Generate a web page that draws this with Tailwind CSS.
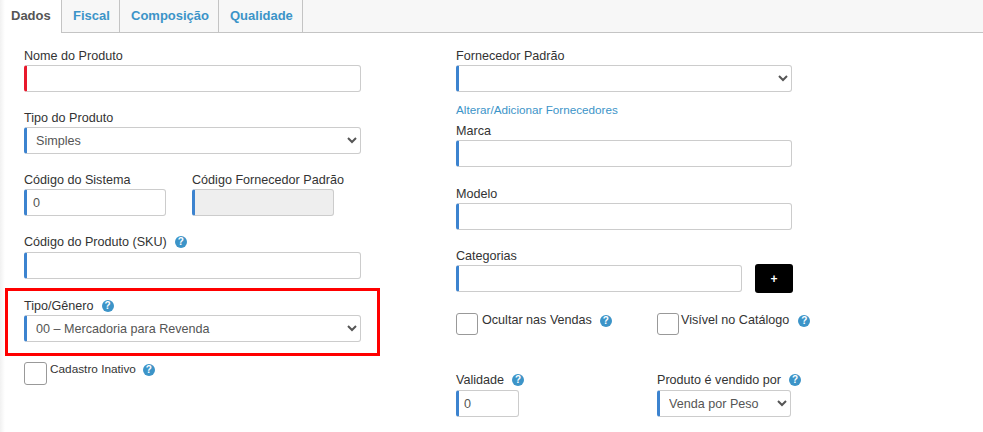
<!DOCTYPE html>
<html lang="pt-BR">
<head>
  <meta charset="UTF-8" />
  <title>Produto</title>
  <script src="https://cdn.jsdelivr.net/npm/@tailwindcss/browser@4"></script>
</head>
<body class="bg-white font-['Liberation_Sans',Arial,sans-serif] text-[12.6px] leading-[18px] text-[#333] overflow-hidden">
  <div class="relative h-[432px] w-[983px] overflow-hidden">
    <!-- soft shadow on the page edge -->
    <div class="absolute inset-y-0 left-0 w-[5px] bg-gradient-to-r from-[#f1f1f1] to-transparent"></div>

    <!-- Tabs -->
    <nav class="flex h-[33px] border-b border-[#c4c4c4] bg-[#f7f7f7] text-[13px] font-bold">
      <a class="w-[62px] h-[33px] bg-white border-r border-[#c4c4c4] pl-[11px] pt-[7px] text-[#555]">Dados</a>
      <a class="w-[58px] border-r border-[#c4c4c4] pl-[11px] pt-[7px] text-[#3c94c8]">Fiscal</a>
      <a class="w-[99px] border-r border-[#c4c4c4] pl-[11px] pt-[7px] text-[#3c94c8]">Composição</a>
      <a class="w-[84px] border-r border-[#c4c4c4] pl-[11px] pt-[7px] text-[#3c94c8]">Qualidade</a>
    </nav>

    <main class="flex pt-[14px]">
      <!-- Left column -->
      <section class="w-[456px] pl-[24px] shrink-0">
        <label class="block h-[18px]">Nome do Produto</label>
        <input class="block w-[337px] h-[27px] bg-white border border-[#ccc] border-l-[3px] border-l-[#e8192c] rounded-[3px]" />

        <label class="block h-[18px] mt-[17px]">Tipo do Produto</label>
        <select class="block w-[337px] h-[27px] bg-white border border-[#ccc] border-l-[3px] border-l-[#3c83cf] rounded-[3px] pl-[5px] text-[#555]">
          <option>Simples</option>
        </select>

        <div class="flex gap-[26px] mt-[17px]">
          <div>
            <label class="block h-[18px]">Código do Sistema</label>
            <input value="0" class="block w-[142px] h-[27px] bg-white border border-[#ccc] border-l-[3px] border-l-[#3c83cf] rounded-[3px] pl-[6px] text-[#555]" />
          </div>
          <div>
            <label class="block h-[18px]">Código Fornecedor Padrão</label>
            <input disabled class="block w-[142px] h-[27px] bg-[#eee] border border-[#ccc] border-l-[3px] border-l-[#3c83cf] rounded-[3px]" />
          </div>
        </div>

        <label class="flex items-start gap-[8px] h-[19px] mt-[17px]">Código do Produto (SKU)
          <span class="mt-[3px] flex size-[12px] items-center justify-center rounded-full bg-[#3c94c8] text-[10px] leading-none font-bold text-white">?</span>
        </label>
        <input class="block w-[337px] h-[27px] bg-white border border-[#ccc] border-l-[3px] border-l-[#3c83cf] rounded-[3px]" />

        <!-- Highlighted field -->
        <div class="w-[375px] h-[68px] -ml-[19px] mt-[9px] border-[3px] border-[#f00] pl-[16px] pt-[6px]">
          <label class="flex items-start gap-[8px] h-[18px]">Tipo/Gênero
            <span class="mt-[3px] flex size-[12px] items-center justify-center rounded-full bg-[#3c94c8] text-[10px] leading-none font-bold text-white">?</span>
          </label>
          <select class="block w-[337px] h-[27px] bg-white border border-[#ccc] border-l-[3px] border-l-[#3c83cf] rounded-[3px] pl-[5px] text-[#555]">
            <option>00 – Mercadoria para Revenda</option>
          </select>
        </div>

        <div class="flex items-start gap-[3px] mt-[6px]">
          <span class="size-[23px] bg-white border border-[#999] rounded-[3px]"></span>
          <span class="text-[11.8px] leading-[15px]">Cadastro Inativo</span>
          <span class="ml-[4px] mt-[2px] flex size-[12px] items-center justify-center rounded-full bg-[#3c94c8] text-[10px] leading-none font-bold text-white">?</span>
        </div>
      </section>

      <!-- Right column -->
      <section class="w-[400px] shrink-0">
        <label class="block h-[18px]">Fornecedor Padrão</label>
        <select class="block w-[336px] h-[27px] bg-white border border-[#ccc] border-l-[3px] border-l-[#3c83cf] rounded-[3px] text-[#555]">
          <option></option>
        </select>

        <a class="block mt-[9px] h-[21px] text-[11.7px] text-[#3c94c8]">Alterar/Adicionar Fornecedores</a>

        <label class="block h-[18px]">Marca</label>
        <input class="block w-[336px] h-[27px] bg-white border border-[#ccc] border-l-[3px] border-l-[#3c83cf] rounded-[3px]" />

        <label class="block h-[18px] mt-[18px]">Modelo</label>
        <input class="block w-[336px] h-[27px] bg-white border border-[#ccc] border-l-[3px] border-l-[#3c83cf] rounded-[3px]" />

        <label class="block h-[17px] mt-[17px]">Categorias</label>
        <div class="flex items-center gap-[13px]">
          <input class="block w-[286px] h-[27px] bg-white border border-[#ccc] border-l-[3px] border-l-[#3c83cf] rounded-[3px]" />
          <button class="w-[38px] h-[29px] bg-black rounded-[3px] text-white font-bold text-[12px]">+</button>
        </div>

        <div class="flex mt-[20px]">
          <div class="flex items-start gap-[4px] w-[201px]">
            <span class="size-[22px] bg-white border border-[#999] rounded-[3px]"></span>
            <span class="leading-[15px]">Ocultar nas Vendas</span>
            <span class="ml-[4px] mt-[2px] flex size-[12px] items-center justify-center rounded-full bg-[#3c94c8] text-[10px] leading-none font-bold text-white">?</span>
          </div>
          <div class="flex items-start gap-[2px]">
            <span class="size-[22px] bg-white border border-[#999] rounded-[3px]"></span>
            <span class="leading-[15px]">Visível no Catálogo</span>
            <span class="ml-[7px] mt-[2px] flex size-[12px] items-center justify-center rounded-full bg-[#3c94c8] text-[10px] leading-none font-bold text-white">?</span>
          </div>
        </div>

        <div class="flex mt-[36px]">
          <div class="w-[201px]">
            <label class="flex items-start gap-[8px] h-[19px]">Validade
              <span class="mt-[3px] flex size-[12px] items-center justify-center rounded-full bg-[#3c94c8] text-[10px] leading-none font-bold text-white">?</span>
            </label>
            <input value="0" class="block w-[63px] h-[27px] bg-white border border-[#ccc] border-l-[3px] border-l-[#3c83cf] rounded-[3px] pl-[5px] text-[#555]" />
          </div>
          <div>
            <label class="flex items-start gap-[8px] h-[19px]">Produto é vendido por
              <span class="mt-[3px] flex size-[12px] items-center justify-center rounded-full bg-[#3c94c8] text-[10px] leading-none font-bold text-white">?</span>
            </label>
            <select class="block w-[134px] h-[27px] bg-white border border-[#ccc] border-l-[3px] border-l-[#3c83cf] rounded-[3px] pl-[5px] text-[#555]">
              <option>Venda por Peso</option>
            </select>
          </div>
        </div>
      </section>
    </main>
  </div>
</body>
</html>
